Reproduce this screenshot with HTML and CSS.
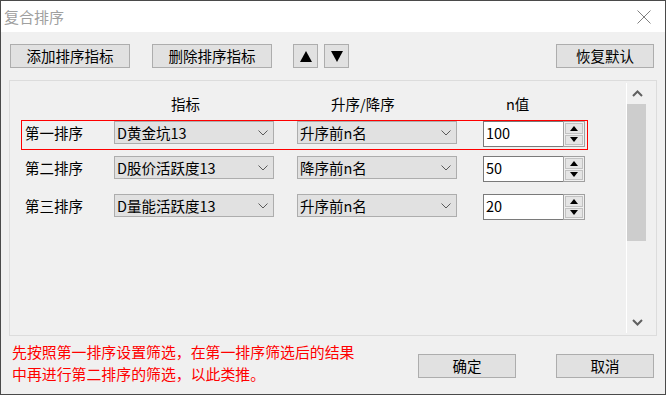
FILE: index.html
```html
<!DOCTYPE html>
<html lang="zh">
<head>
<meta charset="utf-8">
<title>复合排序</title>
<link rel="stylesheet" href="styles.css">
</head>
<body>
<div class="window">
  <div class="titlebar">
    <span class="title">复合排序</span>
    <svg class="close" width="14" height="14" viewBox="0 0 14 14"><path d="M0.5 0.5 L13.5 13.5 M13.5 0.5 L0.5 13.5" stroke="#808080" stroke-width="1" fill="none"/></svg>
  </div>
  <div class="dialog">
    <div class="toolbar">
      <button class="btn btn-wide">添加排序指标</button>
      <button class="btn btn-wide">删除排序指标</button>
      <button class="btn btn-arrow up"><svg width="12" height="11" viewBox="0 0 12 11"><polygon points="6,0 12,11 0,11" fill="#000"/></svg></button>
      <button class="btn btn-arrow"><svg width="12" height="11" viewBox="0 0 12 11"><polygon points="0,0 12,0 6,11" fill="#000"/></svg></button>
      <button class="btn btn-mid push">恢复默认</button>
    </div>
    <div class="group">
      <div class="pane">
        <div class="content">
          <div class="head">
            <span></span>
            <span>指标</span>
            <span>升序/降序</span>
            <span>n值</span>
          </div>
          <div class="row active">
            <span class="label">第一排序</span>
            <div class="combo c1"><span>D黄金坑13</span><svg width="10" height="6" viewBox="0 0 10 6"><polyline points="0.5,0.5 5,5 9.5,0.5" stroke="#5a5a5a" fill="none"/></svg></div>
            <div class="combo c2"><span>升序前n名</span><svg width="10" height="6" viewBox="0 0 10 6"><polyline points="0.5,0.5 5,5 9.5,0.5" stroke="#5a5a5a" fill="none"/></svg></div>
            <div class="spin"><div class="edit">100</div><div class="spinner"><div class="sbtn"><svg width="8" height="5" viewBox="0 0 8 5"><polygon points="4,0 8,5 0,5" fill="#000"/></svg></div><div class="sbtn"><svg width="8" height="5" viewBox="0 0 8 5"><polygon points="0,0 8,0 4,5" fill="#000"/></svg></div></div></div>
          </div>
          <div class="row r2">
            <span class="label">第二排序</span>
            <div class="combo c1"><span>D股价活跃度13</span><svg width="10" height="6" viewBox="0 0 10 6"><polyline points="0.5,0.5 5,5 9.5,0.5" stroke="#5a5a5a" fill="none"/></svg></div>
            <div class="combo c2"><span>降序前n名</span><svg width="10" height="6" viewBox="0 0 10 6"><polyline points="0.5,0.5 5,5 9.5,0.5" stroke="#5a5a5a" fill="none"/></svg></div>
            <div class="spin"><div class="edit">50</div><div class="spinner"><div class="sbtn"><svg width="8" height="5" viewBox="0 0 8 5"><polygon points="4,0 8,5 0,5" fill="#000"/></svg></div><div class="sbtn"><svg width="8" height="5" viewBox="0 0 8 5"><polygon points="0,0 8,0 4,5" fill="#000"/></svg></div></div></div>
          </div>
          <div class="row r3">
            <span class="label">第三排序</span>
            <div class="combo c1"><span>D量能活跃度13</span><svg width="10" height="6" viewBox="0 0 10 6"><polyline points="0.5,0.5 5,5 9.5,0.5" stroke="#5a5a5a" fill="none"/></svg></div>
            <div class="combo c2"><span>升序前n名</span><svg width="10" height="6" viewBox="0 0 10 6"><polyline points="0.5,0.5 5,5 9.5,0.5" stroke="#5a5a5a" fill="none"/></svg></div>
            <div class="spin"><div class="edit">20</div><div class="spinner"><div class="sbtn"><svg width="8" height="5" viewBox="0 0 8 5"><polygon points="4,0 8,5 0,5" fill="#000"/></svg></div><div class="sbtn"><svg width="8" height="5" viewBox="0 0 8 5"><polygon points="0,0 8,0 4,5" fill="#000"/></svg></div></div></div>
          </div>
        </div>
        <div class="scrollbar">
          <div class="sarrow"><svg width="11" height="7" viewBox="0 0 11 7"><polyline points="1,6 5.5,1.5 10,6" stroke="#606060" stroke-width="2" fill="none"/></svg></div>
          <div class="thumb"></div>
          <div class="track"></div>
          <div class="sarrow"><svg width="11" height="7" viewBox="0 0 11 7"><polyline points="1,1 5.5,5.5 10,1" stroke="#606060" stroke-width="2" fill="none"/></svg></div>
        </div>
      </div>
    </div>
    <div class="footer">
      <p class="note">先按照第一排序设置筛选，在第一排序筛选后的结果<br>中再进行第二排序的筛选，以此类推。</p>
      <div class="actions">
        <button class="btn btn-mid">确定</button>
        <button class="btn btn-mid">取消</button>
      </div>
    </div>
  </div>
</div>
</body>
</html>
```

FILE: styles.css
```css
* { box-sizing: border-box; }
html, body { margin: 0; padding: 0; background: #f0f0f0; }
body {
  font-family: "Noto Sans CJK SC", "Noto Sans", sans-serif;
  font-size: 14.5px;
  color: #000;
}
.window {
  width: 666px;
  height: 395px;
  border: 1px solid #4a4a4a;
  background: #f0f0f0;
  display: flex;
  flex-direction: column;
}
.titlebar {
  height: 31px;
  background: #fff;
  display: flex;
  align-items: center;
  padding: 0 14px 0 3px;
}
.title {
  color: #a0a0a0;
  font-size: 15px;
  line-height: 20px;
  margin-top: 1px;
}
.close { margin-left: auto; margin-top: 1px; }
.dialog { flex: 1; display: flex; flex-direction: column; }
.toolbar {
  display: flex;
  align-items: center;
  padding: 12px 11px 0 9px;
}
.btn {
  font-family: inherit;
  font-size: 14.5px;
  line-height: 20px;
  color: #000;
  background: #e1e1e1;
  border: 1px solid #adadad;
  height: 24px;
  padding: 0;
  margin: 0;
  display: flex;
  align-items: center;
  justify-content: center;
}
.btn-wide { width: 120px; }
.btn-wide + .btn-wide { margin-left: 22px; }
.btn-arrow { width: 25px; }
.btn-arrow.up { margin-left: 21px; margin-right: 6px; }
.btn-mid { width: 98px; }
.push { margin-left: auto; }
.group {
  margin: 12px 8px 0 8px;
  height: 256px;
  border: 1px solid #dcdcdc;
  padding: 2px 9px 2px 0;
}
.pane { height: 100%; display: flex; }
.content { flex: 1; }
.head {
  display: grid;
  grid-template-columns: 161px 160px 175px auto;
  height: 37px;
  padding-top: 11px;
  line-height: 20px;
}
.row {
  margin-left: 11px;
  width: 567px;
  height: 30px;
  border: 1px solid transparent;
  padding: 0 2px 0 3px;
  display: flex;
  align-items: flex-start;
}
.row.active { border-color: #ff0000; }
.row.r2 { margin-top: 5px; }
.row.r3 { margin-top: 8px; }
.label { width: 89px; line-height: 23px; height: 23px; }
.combo {
  width: 160px;
  height: 23px;
  background: #e1e1e1;
  border: 1px solid #adadad;
  display: flex;
  align-items: center;
  padding: 0 5px 0 2px;
  line-height: 20px;
}
.combo span { flex: 1; }
.combo.c2 { margin-left: 23px; }
.spin {
  margin-left: 26px;
  width: 102px;
  height: 26px;
  display: flex;
}
.edit {
  flex: 1;
  background: #fff;
  border: 1px solid #7a7a7a;
  border-right: none;
  line-height: 22px;
  padding-left: 2px;
}
.spinner {
  width: 22px;
  border: 1px solid #a0a0a0;
  background: #f0f0f0;
  padding: 1px;
  display: flex;
  flex-direction: column;
  gap: 1px;
}
.sbtn {
  flex: 1;
  background: #e5e5e5;
  border: 1px solid #c2c2c2;
  display: flex;
  align-items: center;
  justify-content: center;
}
.scrollbar {
  width: 21px;
  border-left: 1px solid #fff;
  background: #f0f0f0;
  display: flex;
  flex-direction: column;
}
.sarrow {
  height: 21px;
  display: flex;
  align-items: center;
  justify-content: center;
}
.thumb { height: 137px; background: #cdcdcd; margin-right: 1px; }
.track { flex: 1; }
.footer {
  display: flex;
  align-items: flex-start;
  padding: 0 11px 0 11px;
}
.note {
  margin: 5px 0 0 0;
  color: #ff0000;
  font-size: 14.9px;
  line-height: 22px;
}
.actions {
  margin-left: auto;
  margin-top: 18px;
  display: flex;
  gap: 40px;
}
```
